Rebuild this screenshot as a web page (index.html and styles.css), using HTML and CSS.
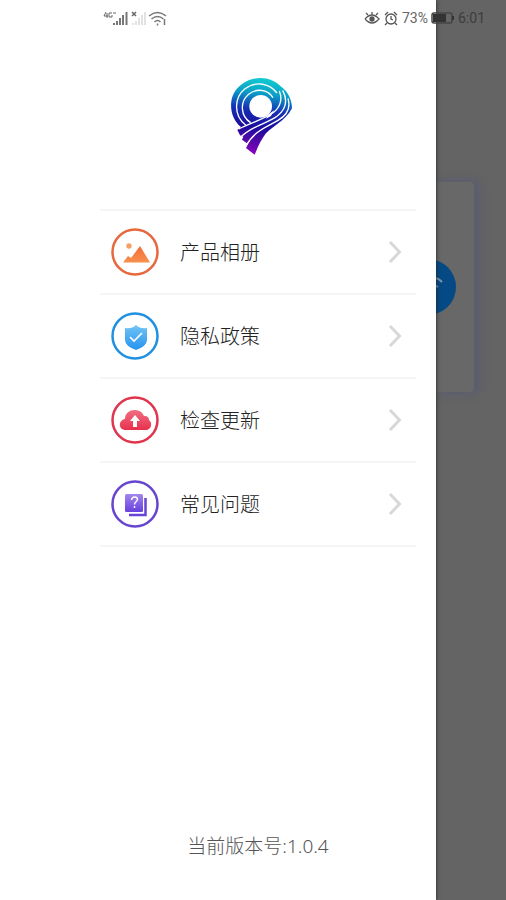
FILE: index.html
```html
<!DOCTYPE html>
<html lang="zh-CN">
<head>
<meta charset="utf-8">
<meta name="viewport" content="width=device-width, initial-scale=1">
<title>侧边菜单</title>
<link rel="stylesheet" href="styles.css">
</head>
<body>
<header class="status">
  <div class="status-group">
    <svg class="signals" width="66" height="18" viewBox="0 0 66 18" aria-hidden="true">
      <path d="M3 3L1 7h4M4 4v5M9 4H6v4h3V6M10 4h3" fill="none" stroke="#666"/>
      <path d="M11 16v-2M14 16v-4M17 16v-7M20 16V6M23.500 16V3" stroke="#777" stroke-width="2"/>
      <path d="M29 3l4 4M33 3l-4 4" stroke="#666" stroke-width="1.500"/>
      <path d="M30 16v-2M33 16v-4M36 16v-7M39 16V6M42 16V3" stroke="#e2e2e2" stroke-width="2"/>
      <g fill="none" stroke="#777" stroke-width="1.500"><path d="M46 7q8.500-7 17 0M48.500 10q6-5 12 0M51.500 13q3-3 6 0"/><path d="M54.500 14.500v2M61.500 10v6"/></g>
    </svg>
  </div>
  <div class="status-group">
    <svg width="16" height="16" viewBox="0 0 16 16" fill="none" stroke="#555" stroke-width="1.300" aria-hidden="true"><path d="M1 9q7-8 14 0q-7 8-14 0M2 3l2 2M8 2v3M14 3l-2 2"/><circle cx="8" cy="9" r="2" fill="#555"/></svg>
    <svg width="16" height="16" viewBox="0 0 16 16" fill="none" stroke="#555" stroke-width="1.300" aria-hidden="true"><circle cx="8" cy="9" r="5"/><path d="M8 6v3l2 1M2 5l3-3M11 2l3 3M4 13l-2 2M12 13l2 2"/></svg>
    <span class="battery-text">73%</span>
    <svg class="battery" width="24" height="12" viewBox="0 0 24 12" aria-hidden="true"><rect x="1" y="1" width="20" height="10" rx="2" fill="none" stroke="#444" stroke-width="1.500"/><path d="M2 2h13v8H2z" fill="#333"/><path d="M22 4v4" stroke="#333" stroke-width="2"/></svg>
    <time class="clock">6:01</time>
  </div>
</header>

<main class="drawer">
  <svg class="logo" viewBox="0 0 252 270" role="img" aria-label="标志">
    <defs>
      <linearGradient id="brand" gradientUnits="userSpaceOnUse" x1="135" y1="22" x2="105" y2="250">
        <stop offset="0" stop-color="#12ccd0"/><stop offset=".2" stop-color="#0a9fc8"/><stop offset=".42" stop-color="#1530b4"/><stop offset=".65" stop-color="#1b0b9c"/><stop offset=".8" stop-color="#4a0aa6"/><stop offset="1" stop-color="#8a00bd"/>
      </linearGradient>
    </defs>
    <path fill="url(#brand)" d="M63 168C27 140 24 82 52 52C91 9 153 14 182 46C205 62 216 88 216 112C198 151 148 168 130 198C116 220 111 235 104 251L78 231L84 219L66 206L70 197L60 193L52 177Z"/>
    <circle cx="122" cy="106" r="34" fill="#fff"/>
    <g fill="none" stroke="#fff" stroke-width="4">
      <path d="M77 162C40 134 42 80 74 54C109 27 150 39 171 66"/>
      <path d="M92 155C62 136 58 94 86 70C112 49 145 57 159 80"/>
      <path d="M56 174C96 153 136 144 161 124C181 108 188 84 178 60"/>
      <path d="M60 201C94 164 142 158 172 135C198 114 204 88 188 58"/>
      <path d="M76 228C102 178 142 168 174 148C200 133 213 111 204 82"/>
    </g>
    <path d="M146 130L162 118L153 135L138 143Z" fill="#fff"/>
  </svg>

  <nav class="menu">
    <a class="item" href="#album">
      <svg class="icon" viewBox="0 0 48 48" aria-hidden="true"><defs><linearGradient id="orange" x2="0" y2="1"><stop stop-color="#f36b38"/><stop offset="1" stop-color="#f7914e"/></linearGradient></defs><circle cx="24" cy="24" r="22.500" fill="none" stroke="#e7683c" stroke-width="2.500"/><circle cx="18" cy="18" r="2.700" fill="#f4a064"/><path d="M12 34.500L17 28l3 2L29 18l10 16.500Z" fill="url(#orange)"/></svg>
      <span class="label">产品相册</span>
      <svg class="chevron" viewBox="0 0 14 24" aria-hidden="true"><path d="M2 2l9.500 10L2 22"/></svg>
    </a>
    <a class="item" href="#privacy">
      <svg class="icon" viewBox="0 0 48 48" aria-hidden="true"><defs><linearGradient id="blue" x2="0" y2="1"><stop stop-color="#73c4f5"/><stop offset="1" stop-color="#2493ef"/></linearGradient></defs><circle cx="24" cy="24" r="22.500" fill="none" stroke="#2090e0" stroke-width="2.500"/><path d="M25 13q4 4 11 3v12q0 6-11 10q-11-4-11-10V16q7 1 11-3Z" fill="url(#blue)"/><path d="M19 25l4 4 8-8" fill="none" stroke="#fff" stroke-width="1.700"/></svg>
      <span class="label">隐私政策</span>
      <svg class="chevron" viewBox="0 0 14 24" aria-hidden="true"><path d="M2 2l9.500 10L2 22"/></svg>
    </a>
    <a class="item" href="#update">
      <svg class="icon" viewBox="0 0 48 48" aria-hidden="true"><defs><linearGradient id="red" x2="0" y2="1"><stop stop-color="#ef7184"/><stop offset="1" stop-color="#e92f4d"/></linearGradient></defs><circle cx="24" cy="24" r="22.500" fill="none" stroke="#df354e" stroke-width="2.500"/><path d="M15 34c-8 0-8-10-1-11c0-11 16-12 19-3c4 0 5 2 5 4c4 3 2 10-3 10Z" fill="url(#red)"/><path d="M24 19l5 6h-3v6h-4v-6h-3Z" fill="#fff"/></svg>
      <span class="label">检查更新</span>
      <svg class="chevron" viewBox="0 0 14 24" aria-hidden="true"><path d="M2 2l9.500 10L2 22"/></svg>
    </a>
    <a class="item" href="#faq">
      <svg class="icon" viewBox="0 0 48 48" aria-hidden="true"><defs><linearGradient id="violet" x2="0" y2="1"><stop stop-color="#a486ed"/><stop offset="1" stop-color="#6840dd"/></linearGradient></defs><circle cx="24" cy="24" r="22.500" fill="none" stroke="#6845ce" stroke-width="2.500"/><rect x="14" y="14" width="18" height="18" rx="1.500" fill="url(#violet)"/><path d="M34.500 18v17H18" fill="none" stroke="#6743d8" stroke-width="2.500"/><path d="M20.500 20q.5-3 3-3q3 0 3 2.500c0 2-3 2-3 5M23.500 26v2" fill="none" stroke="#fff" stroke-width="1.400"/></svg>
      <span class="label">常见问题</span>
      <svg class="chevron" viewBox="0 0 14 24" aria-hidden="true"><path d="M2 2l9.500 10L2 22"/></svg>
    </a>
  </nav>

  <p class="version">当前版本号:1.0.4</p>
</main>

<aside class="backdrop" aria-hidden="true">
  <div class="card">
    <div class="disc">
      <svg viewBox="0 0 56 56" fill="none" stroke="#7894ad" stroke-width="2"><path d="M22 24q12-10 20-1M27 29q6-5 11-1"/></svg>
    </div>
  </div>
</aside>
</body>
</html>
```

FILE: styles.css
```css
* {
  box-sizing: border-box;
}

body {
  display: flex;
  min-height: 100vh;
  margin: 0;
  background: #fff;
  color: #333;
  font-family: "Noto Sans", "Noto Sans CJK SC", sans-serif;
}

.status {
  position: absolute;
  z-index: 2;
  inset: 0 0 auto;
  display: flex;
  justify-content: space-between;
  align-items: center;
  height: 36px;
  padding: 0 21px 0 103px;
}

.status-group {
  display: flex;
  align-items: center;
  gap: 3px;
  color: #3c3c3c;
  font-family: Roboto, sans-serif;
  font-size: 14px;
  line-height: 20px;
}

.battery-text {
  color: #666;
}

.drawer {
  z-index: 1;
  display: flex;
  flex: 1;
  flex-direction: column;
  padding: 71px 20px 40px 100px;
  background: #fff;
  box-shadow: 0 0 4px #222;
}

.logo {
  align-self: center;
  width: 84px;
  height: 90px;
  margin: 0 0 48px 8px;
}

.menu {
  border-top: 2px solid #f5f5f5;
}

.item {
  display: flex;
  align-items: center;
  height: 84px;
  padding: 0 14px 0 11px;
  border-bottom: 2px solid #f5f5f5;
  color: #222;
  text-decoration: none;
}

.icon {
  width: 48px;
  height: 48px;
}

.label {
  flex: 1;
  margin-left: 21px;
  font-family: "Noto Sans CJK SC", sans-serif;
  font-size: 20px;
  font-weight: 300;
  line-height: 28px;
}

.chevron {
  width: 14px;
  height: 24px;
  fill: none;
  stroke: #d8d8d8;
  stroke-width: 3;
}

.version {
  margin: auto 0 0;
  color: #555;
  font-size: 19px;
  font-weight: 300;
  line-height: 28px;
  text-align: center;
}

.backdrop {
  width: 70px;
  padding: 182px 32px 0 0;
  overflow: hidden;
  background: #646464;
}

.card {
  display: flex;
  align-items: center;
  justify-content: flex-end;
  height: 210px;
  padding-right: 18px;
  border-radius: 0 4px 4px 0;
  background: #686868;
  box-shadow: 3px 0 10px 2px #5a5c70;
}

.disc {
  flex: none;
  width: 56px;
  height: 56px;
  border-radius: 50%;
  background: #064a85;
}
```
